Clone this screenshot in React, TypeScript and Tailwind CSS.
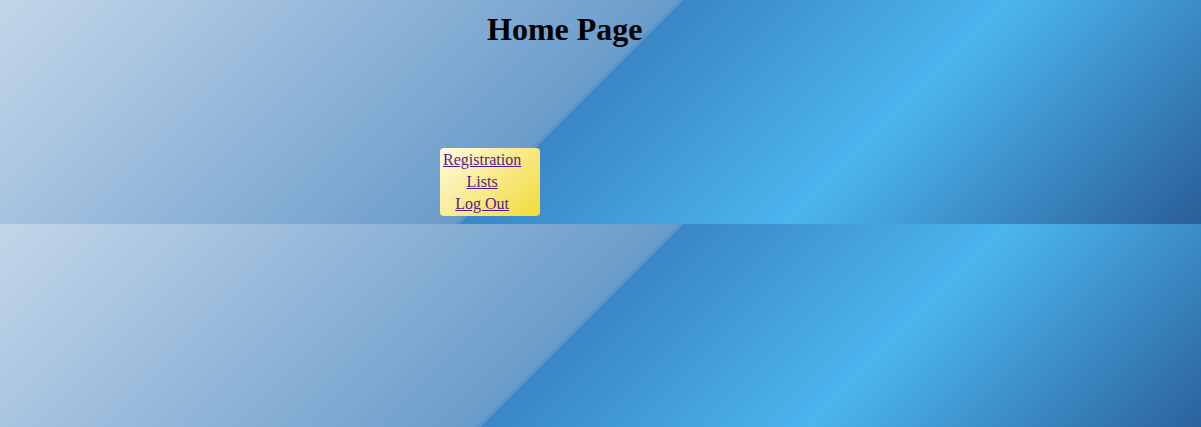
import React from 'react';

const links = ['Registration', 'Lists', 'Log Out'];

const App: React.FC = () => {
  return (
    <div className="h-[427px] w-full overflow-hidden bg-[linear-gradient(135deg,#c3d6e9_0%,#6a9ccb_47.6%,#5c95ca_47.6%,#5c95ca_48%,#3a86c6_48%,#4bb5ee_71%,#2a5e98_100%)] bg-size-[100%_224px] bg-repeat font-['Liberation_Serif',serif]">
      <h1 className="ml-[487px] pt-[11px] text-[32px] leading-[37px] font-bold text-black">Home Page</h1>
      {/* nav box */}
      <div className="mt-[100px] ml-[440px] h-[68px] w-[100px] rounded bg-[linear-gradient(135deg,#fffbe2_0%,#f8ea8a_50%,#f2db36_100%)] pl-[3px]">
        <div className="inline-flex flex-col items-center">
          {links.map((l) => (
            <a key={l} href="#" className="text-[16px] leading-[22px] text-[#551a8b] underline">
              {l}
            </a>
          ))}
        </div>
      </div>
    </div>
  );
};

export default App;
